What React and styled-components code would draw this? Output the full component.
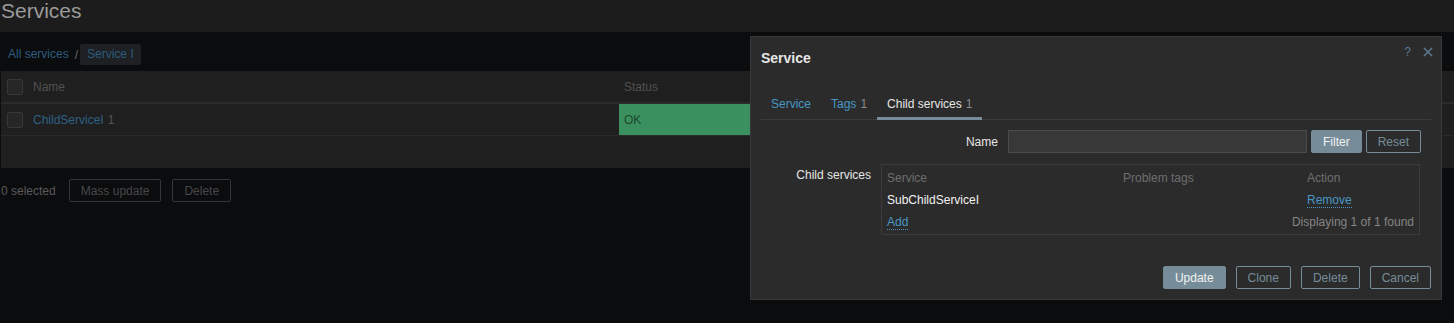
import React from "react";
import styled, { createGlobalStyle } from "styled-components";

const Global = createGlobalStyle`
  html, body { margin: 0; padding: 0; }
  body {
    background: #0b0c0e;
    font-family: "Liberation Sans", Arial, sans-serif;
    font-size: 12px;
    color: #f2f2f2;
    overflow: hidden;
  }
`;

const Page = styled.div`
  position: relative;
  width: 1454px;
  height: 323px;
`;

const Header = styled.header`
  height: 32px;
  background: #1c1c1c;
  padding-left: 1px;
`;

const Title = styled.h1`
  margin: 0;
  font-size: 21px;
  line-height: 21px;
  font-weight: normal;
  color: #9a9a9a;
`;

const Main = styled.main`
  padding: 12px 0 0 1px;
`;

const Breadcrumbs = styled.nav`
  display: flex;
  align-items: center;
  height: 21px;
  padding-left: 7px;
`;

const Crumb = styled.span`
  color: #2c5c7e;
  padding: ${(p) => (p.$current ? "0 7px" : "0")};
  background: ${(p) => (p.$current ? "#1e2023" : "transparent")};
  line-height: 21px;
  border-radius: 2px;
`;

const Sep = styled.span`
  color: #6a6a6a;
  margin: 0 2px 0 6px;
`;

const Table = styled.div`
  margin-top: 6px;
  background: #1f1f1f;
`;

const Row = styled.div`
  display: flex;
  align-items: stretch;
  height: ${(p) => p.$h}px;
  border-bottom: ${(p) => p.$border}px solid #2a2a2a;
`;

const CheckCell = styled.div`
  width: 27px;
  padding-left: 6px;
  box-sizing: border-box;
  display: flex;
  align-items: center;
`;

const Check = styled.span`
  width: 16px;
  height: 16px;
  box-sizing: border-box;
  border: 1px solid #383838;
  background: #262626;
  border-radius: 2px;
`;

const Cell = styled.div`
  width: ${(p) => p.$w}px;
  padding-left: 5px;
  box-sizing: border-box;
  display: flex;
  align-items: center;
  color: ${(p) => p.$color || "#505050"};
  background: ${(p) => p.$bg || "transparent"};
`;

const Link = styled.span`
  color: #2d6186;
`;

const Count = styled.span`
  color: ${(p) => p.$color || "#555"};
  margin-left: 4px;
`;

const Actions = styled.div`
  display: flex;
  align-items: center;
  gap: 11px;
  margin-top: 11px;
`;

const Selected = styled.span`
  color: #5a5a5a;
  margin-right: 2px;
`;

const DimButton = styled.button`
  font: inherit;
  height: 23px;
  padding: 0 11px;
  background: transparent;
  border: 1px solid #363636;
  border-radius: 2px;
  color: #484848;
`;

const Modal = styled.div`
  position: absolute;
  left: 750px;
  top: 36px;
  width: 692px;
  height: 264px;
  box-sizing: border-box;
  background: #2b2b2b;
  border: 1px solid #383838;
  display: flex;
  flex-direction: column;
`;

const ModalHead = styled.div`
  height: 42px;
  padding: 0 10px;
  display: flex;
  align-items: center;
  position: relative;
`;

const ModalTitle = styled.h4`
  margin: 0;
  font-size: 14px;
  font-weight: bold;
  color: #e6e6e6;
`;

const HeadIcons = styled.div`
  position: absolute;
  right: 8px;
  top: 8px;
  display: flex;
  align-items: center;
  gap: 12px;
  color: #5b7a92;
`;

const Help = styled.span`
  font-size: 12px;
`;

const ModalBody = styled.div`
  padding: 8px 10px 0 10px;
  flex: 1;
  display: flex;
  flex-direction: column;
`;

const Tabs = styled.div`
  display: flex;
  border-bottom: 1px solid #3b3b3b;
  height: 32px;
`;

const Tab = styled.div`
  padding: 0 10px;
  display: flex;
  align-items: center;
  color: ${(p) => (p.$active ? "#e6e6e6" : "#4796c4")};
  box-shadow: ${(p) => (p.$active ? "inset 0 -3px 0 #768d99" : "none")};
  margin-bottom: -1px;
`;

const FormGrid = styled.div`
  display: grid;
  grid-template-columns: 110px 540px;
  column-gap: 10px;
  row-gap: 11px;
  margin-top: 10px;
`;

const Label = styled.label`
  text-align: right;
  color: #e6e6e6;
  padding-top: ${(p) => p.$pt || 0}px;
`;

const FilterRow = styled.div`
  grid-column: 1 / 3;
  display: flex;
  justify-content: flex-end;
  align-items: center;
  gap: 4px;
`;

const NameLabel = styled.label`
  color: #e6e6e6;
  margin-right: 6px;
`;

const Input = styled.div`
  width: 299px;
  height: 23px;
  box-sizing: border-box;
  background: #383838;
  border: 1px solid #4b4b4b;
`;

const Button = styled.button`
  font: inherit;
  height: 23px;
  padding: 0 11px;
  border-radius: 2px;
  border: 1px solid #768d99;
  background: ${(p) => (p.$primary ? "#768d99" : "transparent")};
  color: ${(p) => (p.$primary ? "#f2f2f2" : "#768d99")};
`;

const ListBox = styled.div`
  border: 1px solid #3b3b3b;
  height: 71px;
  box-sizing: border-box;
  padding-top: 2px;
  margin-right: 1px;
`;

const ListRow = styled.div`
  display: grid;
  grid-template-columns: 236px 184px 1fr;
  height: 22px;
  align-items: center;
`;

const ListCell = styled.div`
  padding-left: 5px;
  color: ${(p) => p.$color || "#f2f2f2"};
  text-align: ${(p) => p.$align || "left"};
  padding-right: ${(p) => (p.$align === "right" ? "5px" : "0")};
  grid-column: ${(p) => p.$span || "auto"};
`;

const DotLink = styled.span`
  color: #4796c4;
  border-bottom: 1px dotted #4796c4;
`;

const Footer = styled.div`
  margin-top: auto;
  padding-bottom: 10px;
  display: flex;
  justify-content: flex-end;
  gap: 10px;
`;

function CloseIcon() {
  return (
    <svg width="10" height="10" viewBox="0 0 10 10">
      <path d="M1 1 L9 9 M9 1 L1 9" stroke="#5b7a92" strokeWidth="1.6" />
    </svg>
  );
}

export default function App() {
  return (
    <Page>
      <Global />
      <Header>
        <Title>Services</Title>
      </Header>
      <Main>
        <Breadcrumbs>
          <Crumb>All services</Crumb>
          <Sep>/</Sep>
          <Crumb $current>Service I</Crumb>
        </Breadcrumbs>
        <Table>
          <Row $h={31} $border={2}>
            <CheckCell>
              <Check />
            </CheckCell>
            <Cell $w={591}>Name</Cell>
            <Cell $w={200}>Status</Cell>
          </Row>
          <Row $h={31} $border={1}>
            <CheckCell>
              <Check />
            </CheckCell>
            <Cell $w={591}>
              <Link>ChildServiceI</Link>
              <Count>1</Count>
            </Cell>
            <Cell $w={200} $bg="#3b905f" $color="#1c4a2c">
              OK
            </Cell>
          </Row>
          <Row $h={32} $border={0} />
        </Table>
        <Actions>
          <Selected>0 selected</Selected>
          <DimButton>Mass update</DimButton>
          <DimButton>Delete</DimButton>
        </Actions>
      </Main>

      <Modal>
        <ModalHead>
          <ModalTitle>Service</ModalTitle>
          <HeadIcons>
            <Help>?</Help>
            <CloseIcon />
          </HeadIcons>
        </ModalHead>
        <ModalBody>
          <Tabs>
            <Tab>Service</Tab>
            <Tab>
              Tags<Count $color="#8a8a8a">1</Count>
            </Tab>
            <Tab $active>
              Child services<Count $color="#8a8a8a">1</Count>
            </Tab>
          </Tabs>
          <FormGrid>
            <FilterRow>
              <NameLabel>Name</NameLabel>
              <Input />
              <Button $primary>Filter</Button>
              <Button>Reset</Button>
            </FilterRow>
            <Label $pt={4}>Child services</Label>
            <ListBox>
              <ListRow>
                <ListCell $color="#6e6e6e">Service</ListCell>
                <ListCell $color="#6e6e6e">Problem tags</ListCell>
                <ListCell $color="#6e6e6e">Action</ListCell>
              </ListRow>
              <ListRow>
                <ListCell>SubChildServiceI</ListCell>
                <ListCell />
                <ListCell>
                  <DotLink>Remove</DotLink>
                </ListCell>
              </ListRow>
              <ListRow>
                <ListCell>
                  <DotLink>Add</DotLink>
                </ListCell>
                <ListCell $span="2 / 4" $align="right" $color="#858585">
                  Displaying 1 of 1 found
                </ListCell>
              </ListRow>
            </ListBox>
          </FormGrid>
          <Footer>
            <Button $primary>Update</Button>
            <Button>Clone</Button>
            <Button>Delete</Button>
            <Button>Cancel</Button>
          </Footer>
        </ModalBody>
      </Modal>
    </Page>
  );
}
